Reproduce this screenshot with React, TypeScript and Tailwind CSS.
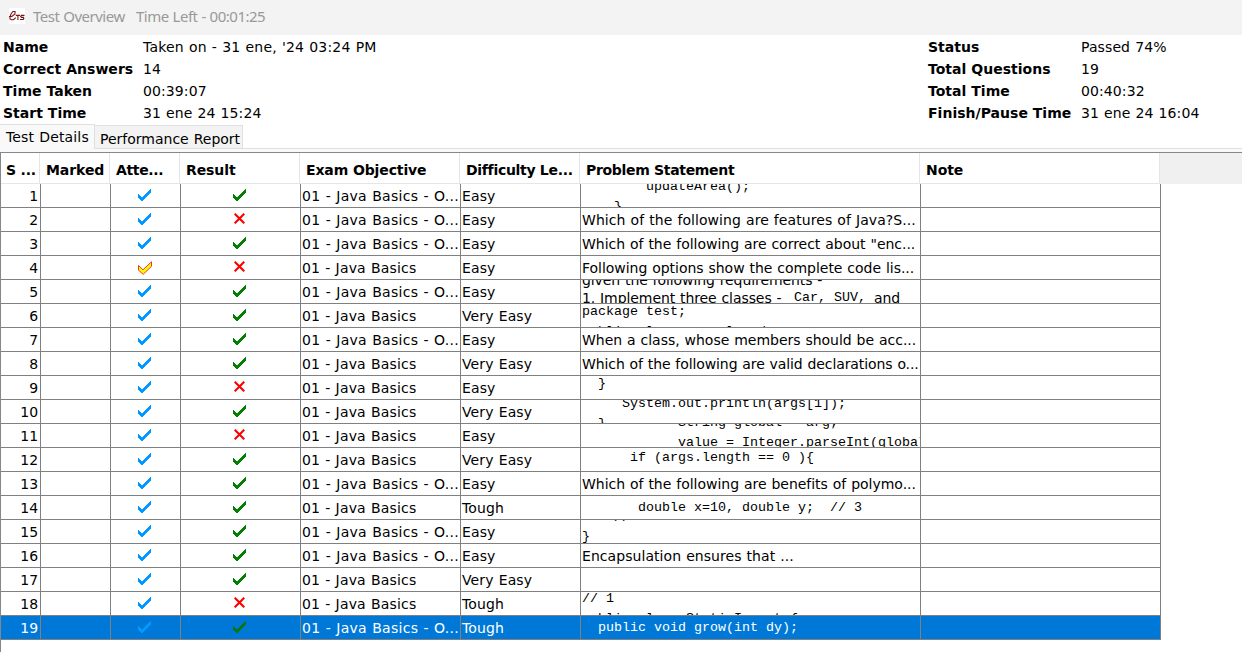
import React from "react";

type Row = {
  tried?: "yellow";
  ok: boolean;
  more: boolean;
  level: string;
  text?: string;
  fit?: string;
  shift?: string;
  lines?: string[];
};

const rows: Row[] = [
  { ok: true, more: true, level: "Easy", shift: "-mt-[7px] leading-[20px]", lines: ["        updateArea();", "    }"] },
  { ok: false, more: true, level: "Easy", fit: "tracking-[0.07px]", text: "Which of the following are features of Java?S..." },
  { ok: true, more: true, level: "Easy", fit: "tracking-[-0.02px]", text: 'Which of the following are correct about "enc...' },
  { tried: "yellow", ok: false, more: false, level: "Easy", fit: "tracking-[-0.03px]", text: "Following options show the complete code lis..." },
  { ok: true, more: true, level: "Easy" },
  { ok: true, more: false, level: "Very Easy", shift: "-mt-[2px] leading-[20px]", lines: ["package test;", "public class a    l   d"] },
  { ok: true, more: true, level: "Easy", fit: "tracking-[-0.02px]", text: "When a class, whose members should be acc..." },
  { ok: true, more: false, level: "Very Easy", fit: "tracking-[-0.09px]", text: "Which of the following are valid declarations o..." },
  { ok: false, more: false, level: "Easy", shift: "-mt-[2px] leading-[20px]", lines: ["  }"] },
  { ok: true, more: false, level: "Very Easy", shift: "-mt-[6px] leading-[20px]", lines: ["     System.out.println(args[1]);", "  }"] },
  { ok: false, more: false, level: "Easy", shift: "-mt-[11px] leading-[20px]", lines: ["            String global = arg;", "            value = Integer.parseInt(global);"] },
  { ok: true, more: false, level: "Very Easy", shift: "mt-0 leading-[20px]", lines: ["      if (args.length == 0 ){"] },
  { ok: true, more: true, level: "Easy", fit: "tracking-[-0.02px]", text: "Which of the following are benefits of polymo..." },
  { ok: true, more: false, level: "Tough", shift: "mt-[2px] leading-[20px]", lines: ["       double x=10, double y;  // 3"] },
  { ok: true, more: true, level: "Easy", shift: "-mt-[12px] leading-[19px]", lines: ["    //", "}"] },
  { ok: true, more: true, level: "Easy", fit: "tracking-[0.06px]", text: "Encapsulation ensures that ..." },
  { ok: true, more: false, level: "Very Easy", text: "" },
  { ok: false, more: false, level: "Tough", shift: "-mt-[3px] leading-[20px]", lines: ["// 1", "public class StaticImport {"] },
  { ok: true, more: true, level: "Tough", shift: "mt-[2px] leading-[20px]", lines: ["  public void grow(int dy);"] },
];

const TICK_TOPS = [5, 6, 7, 8, 8, 7, 6, 5, 4, 3, 2, 1, 0];

function Tick({ className, dither }: { className: string; dither?: string }) {
  return (
    <svg width="13" height="12" viewBox="0 0 13 12" shapeRendering="crispEdges" className={className}>
      {TICK_TOPS.map((y, x) => (
        <rect key={x} x={x} y={y} width="1" height="4" fill="currentColor" />
      ))}
      {dither &&
        TICK_TOPS.flatMap((y, x) =>
          [0, 1, 2, 3]
            .filter((k) => (x + y + k) % 2 === 0)
            .map((k) => <rect key={`${x}-${k}`} x={x} y={y + k} width="1" height="1" fill={dither} />)
        )}
    </svg>
  );
}

function YellowTick() {
  return (
    <svg width="14" height="14" viewBox="0 0 14 14" className="mr-px mt-px">
      <path d="M.5 4.5 L5 8.8 L13.5 .8 V5.3 L5.2 13.3 L.5 9.2 Z" fill="#ff0" stroke="#e8202a" strokeWidth="0.9" />
    </svg>
  );
}

function Cross() {
  return (
    <svg width="11" height="11" viewBox="0 0 11 11" className="mr-[2px] mb-[2px]">
      <path d="M.7 .7 L10.3 10.3 M10.3 .7 L.7 10.3" stroke="#ff0000" strokeWidth="2.1" />
    </svg>
  );
}

function Logo() {
  return (
    <svg width="16" height="16" viewBox="0 0 16 16" className="bg-white" fill="none" stroke="#7a1414" strokeWidth="1.1">
      <path d="M0 8.5 H2.8 L6 6 V3.5 H4 L2 6 L1 9 V11 L2.5 11.7 H4.5 L6.8 9.6" />
      <path d="M6.8 7.4 H11 M8.9 7.4 V12" />
      <path d="M15.5 7.4 H12.4 L11.7 8.4 L12.4 9.4 H14.4 L14.9 10.4 L14.2 11.5 H11" />
    </svg>
  );
}

const cell = "h-full shrink-0 overflow-hidden border-r border-[#808080] whitespace-pre";

function TableRow({ row, n }: { row: Row; n: number }) {
  const selected = n === 19;
  return (
    <div className={`flex h-[24px] w-[1160px] border-b border-[#808080] leading-[24px] ${selected ? "bg-[#0078d7] text-white" : ""}`}>
      <div className={`${cell} w-[40px] pr-[2px] text-right`}>{n}</div>
      <div className={`${cell} w-[70px]`} />
      <div className={`${cell} flex w-[70px] items-center justify-center`}>
        {row.tried ? <YellowTick /> : <Tick className="mr-[2px] mb-px text-[#0099ff]" />}
      </div>
      <div className={`${cell} flex w-[120px] items-center justify-center`}>
        {row.ok ? <Tick className="mr-[2px] mb-px text-[#008000]" dither={selected ? "#0b6b2b" : undefined} /> : <Cross />}
      </div>
      <div className={`${cell} w-[160px] pl-[1px] ${row.more ? "tracking-[0.29px]" : "tracking-[0.17px]"}`}>
        {row.more ? "01 - Java Basics - O..." : "01 - Java Basics"}
      </div>
      <div className={`${cell} w-[120px] pl-[1px] tracking-[0.12px]`}>{row.level}</div>
      <div className={`${cell} w-[340px] pl-[1px] ${row.fit ?? ""}`}>
        {row.lines ? (
          <div className={`font-['Liberation_Mono',monospace] text-[13.33px] tracking-normal [word-spacing:0] ${row.shift}`}>
            {row.lines.map((l) => (
              <div key={l}>{l}</div>
            ))}
          </div>
        ) : n === 5 ? (
          <div className="-mt-[9px] leading-[18px]">
            <div>given the following requirements -</div>
            <div className="flex">
              <span className="w-[212px]">1. Implement three classes - </span>
              <span className="w-[80px] font-['Liberation_Mono',monospace] text-[13.33px] tracking-normal [word-spacing:0]">Car, SUV,</span>
              <span>and</span>
            </div>
          </div>
        ) : (
          row.text
        )}
      </div>
      <div className={`${cell} w-[240px]`} />
    </div>
  );
}

const headers: [string, string][] = [
  ["S ...", "w-[39px] pl-[5px] tracking-[-0.2px]"],
  ["Marked", "w-[70px] pl-[6px]"],
  ["Atte...", "w-[70px] pl-[6px] tracking-[-0.35px]"],
  ["Result", "w-[120px] pl-[6px]"],
  ["Exam Objective", "w-[160px] pl-[6px] tracking-[-0.12px]"],
  ["Difficulty Le...", "w-[120px] pl-[6px] tracking-[-0.3px]"],
  ["Problem Statement", "w-[340px] pl-[6px] tracking-[-0.32px]"],
  ["Note", "w-[240px] pl-[6px]"],
];

function Facts({ items, className }: { items: [string, string][]; className: string }) {
  return (
    <dl className={`grid auto-rows-[22px] leading-[22px] ${className}`}>
      {items.map(([k, v]) => (
        <React.Fragment key={k}>
          <dt className="font-bold tracking-[0.02px] [word-spacing:0]">{k}</dt>
          <dd className={v.length > 20 ? "tracking-[0.18px]" : "tracking-[0.1px]"}>{v}</dd>
        </React.Fragment>
      ))}
    </dl>
  );
}

export default function App() {
  return (
    <div className="flex h-[652px] w-[1242px] flex-col overflow-hidden bg-white font-['DejaVu_Sans',sans-serif] text-[14px] tracking-[-0.08px] whitespace-nowrap text-black [word-spacing:0.5px]">
      <header className="flex h-[35px] shrink-0 items-center bg-[#f3f3f3] pl-[9px] pb-[3px] font-['Noto_Sans',sans-serif] text-[15px] tracking-[-0.5px] text-[#999]">
        <Logo />
        <span className="ml-[8px] w-[103px]">Test Overview</span>
        <span>Time Left - 00:01:25</span>
      </header>

      <section className="flex h-[89px] shrink-0 justify-between pt-px">
        <Facts
          className="grid-cols-[140px_300px] pl-[3px]"
          items={[
            ["Name", "Taken on - 31 ene, '24 03:24 PM"],
            ["Correct Answers", "14"],
            ["Time Taken", "00:39:07"],
            ["Start Time", "31 ene 24 15:24"],
          ]}
        />
        <Facts
          className="grid-cols-[153px_161px]"
          items={[
            ["Status", "Passed 74%"],
            ["Total Questions", "19"],
            ["Total Time", "00:40:32"],
            ["Finish/Pause Time", "31 ene 24 16:04"],
          ]}
        />
      </section>

      <nav className="flex h-[28px] shrink-0 items-end border-b-[3px] border-[#f9f9f9]">
        <div className="h-[25px] w-[95px] border-t border-r border-[#e0e0e0] bg-[#f9f9f9] pl-[6px] leading-[25px] tracking-[0.15px]">Test Details</div>
        <div className="h-[24px] w-[148px] border border-[#e0e0e0] border-l-0 bg-[#f3f3f3] pl-[5px] leading-[26px] tracking-[0px]">Performance Report</div>
        <div className="h-px flex-1 bg-[#e0e0e0]" />
      </nav>

      <main className="flex min-h-0 flex-1 flex-col border-t border-l border-[#828790]">
        <div className="flex h-[31px] shrink-0 bg-[#f0f0f0] font-bold [word-spacing:0]">
          {headers.map(([label, w]) => (
            <div key={label} className={`shrink-0 border-r border-b border-[#e5e5e5] bg-white leading-[34px] ${w}`}>
              {label}
            </div>
          ))}
        </div>
        {rows.map((row, i) => (
          <TableRow key={i} row={row} n={i + 1} />
        ))}
      </main>
    </div>
  );
}
